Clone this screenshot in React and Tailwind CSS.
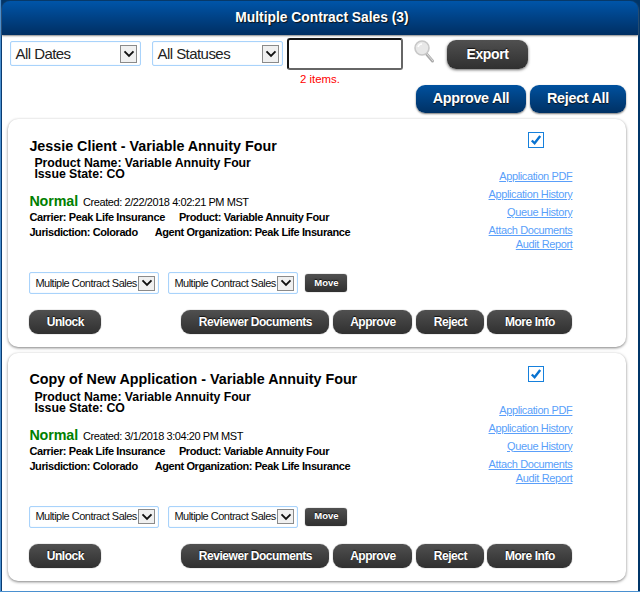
import React from "react";

function Arrow({ className }) {
  return (
    <span className={`flex shrink-0 items-center justify-center border border-[#8a8a8a] bg-[#f0f0f0] ${className}`}>
      <svg width="12" height="8" viewBox="0 0 12 8" fill="none" stroke="#111" strokeWidth="1.9">
        <path d="M1.5 1.3 6 5.8 10.5 1.3" />
      </svg>
    </span>
  );
}

function FilterSelect({ label }) {
  return (
    <div className="flex h-[25px] w-[131px] items-center justify-between rounded-[2px] border border-[#a9d3fb] bg-white pr-[3px] pl-[4.5px] text-[15px] tracking-[-0.55px] text-[#222] shadow-[inset_0_0_1px_#a9d3fb]">
      <span className="pt-px">{label}</span>
      <Arrow className="h-[18px] w-[17px]" />
    </div>
  );
}

function QueueSelect() {
  return (
    <div className="flex h-[22px] w-[130px] items-center rounded-[2px] border border-[#a9d3fb] bg-white pr-[3px] pl-[5px] text-[11px] tracking-[-0.51px] text-[#111] shadow-[inset_0_0_1px_#a9d3fb]">
      <span className="min-w-0 flex-1 whitespace-nowrap">Multiple Contract Sales</span>
      <Arrow className="h-[15px] w-[17px]" />
    </div>
  );
}

const dark =
  "flex items-center justify-center bg-linear-to-b from-[#505050] to-[#303030] font-bold text-white whitespace-nowrap shadow-[0_0_1px_#555] [text-shadow:0_-1px_1px_#111]";
const blue =
  "flex h-[28px] items-center justify-center rounded-[9px] bg-linear-to-b from-[#00519f] to-[#003164] text-[14.3px] tracking-[-0.28px] font-bold text-white whitespace-nowrap shadow-[0_1px_2px_#777] [text-shadow:0_1px_1px_#111]";

function Card({ title, created, className }) {
  return (
    <section className={`flex h-[228px] w-[618px] flex-col rounded-[10px] bg-white pl-[21.4px] shadow-[0_1px_3px_rgba(0,0,0,0.5)] ${className}`}>
      <div className="flex h-[153px]">
        <div className="w-[430px] pt-[16.9px] whitespace-nowrap text-black">
          <h2 className="h-[20px] text-[14.3px] leading-[20px] font-bold">{title}</h2>
          <div className="mt-[2.6px] h-[11px] pl-[5px] text-[12.3px] leading-[11px] font-bold tracking-[-0.03px]">Product Name: Variable Annuity Four</div>
          <div className="h-[11px] pl-[5px] text-[12.3px] leading-[11px] font-bold tracking-[-0.03px]">Issue State: CO</div>
          <div className="mt-[11.5px] flex h-[18px] items-baseline gap-[5px] leading-[18px]">
            <span className="text-[14.3px] font-bold tracking-[-0.1px] text-[#008000]">Normal</span>
            <span className="text-[11px] tracking-[-0.43px]">Created: {created}</span>
          </div>
          <div className="flex h-[15px] gap-[14px] text-[11px] leading-[15px] font-bold tracking-[-0.38px]">
            <span>Carrier: Peak Life Insurance</span>
            <span>Product: Variable Annuity Four</span>
          </div>
          <div className="flex h-[15px] gap-[17px] text-[11px] leading-[15px] font-bold tracking-[-0.41px]">
            <span>Jurisdiction: Colorado</span>
            <span>Agent Organization: Peak Life Insurance</span>
          </div>
        </div>
        <div className="flex w-[113px] flex-col items-end pt-[13px] text-[11px] tracking-[-0.38px] whitespace-nowrap text-[#5a9ffa]">
          <span className="mr-[28px] mb-[20px] flex h-[16px] w-[16px] shrink-0 items-center justify-center border border-[#1680dc] bg-white">
            <svg width="12" height="12" viewBox="0 0 12 12" fill="none" stroke="#0872d0" strokeWidth="2.4">
              <path d="M1.8 6.5 4.6 9.3 10.2 2" />
            </svg>
          </span>
          <a className="h-[18px] leading-[16px] underline">Application PDF</a>
          <a className="h-[18px] leading-[16px] underline">Application History</a>
          <a className="h-[18px] leading-[16px] underline">Queue History</a>
          <a className="h-[14px] leading-[16px] underline">Attach Documents</a>
          <a className="h-[14px] leading-[16px] underline">Audit Report</a>
        </div>
      </div>
      <div className="flex h-[22px] items-center">
        <QueueSelect />
        <div className="w-[9px]" />
        <QueueSelect />
        <button className={`${dark} ml-[7px] h-[18px] w-[42px] rounded-[3px] text-[9.5px]`}>Move</button>
      </div>
      <div className="mt-[16px] flex h-[24px] text-[12px] tracking-[-0.45px]">
        <button className={`${dark} w-[72px] rounded-[9px]`}>Unlock</button>
        <button className={`${dark} ml-[80px] w-[148px] rounded-[9px]`}>Reviewer Documents</button>
        <button className={`${dark} ml-[4px] w-[79px] rounded-[9px]`}>Approve</button>
        <button className={`${dark} ml-[4px] w-[68px] rounded-[9px]`}>Reject</button>
        <button className={`${dark} ml-[3px] w-[85px] rounded-[9px]`}>More Info</button>
      </div>
    </section>
  );
}

export default function App() {
  return (
    <div className="h-[593px] w-[640px] overflow-hidden bg-white font-['Liberation_Sans',Arial,sans-serif]">
      <div className="h-[592px] border-b border-l border-[#4a90d0] bg-[#003568]">
        <div className="h-full border-l border-[#0a3b70] pt-px pr-[2px]">
          <div className="flex h-full flex-col bg-[#003568]">
            <header className="z-10 flex h-[34px] shrink-0 items-center justify-center rounded-t-[8px] bg-linear-to-b from-[#0055a9] to-[#002f63] text-[13.8px] font-bold text-white shadow-[0_1px_2px_#888] [text-shadow:1px_1px_1px_#111]">
              <h1 className="pl-[4px]">Multiple Contract Sales (3)</h1>
            </header>
            <main className="flex-1 bg-white">
              <div className="flex h-[50px] pl-[8px]">
                <div className="flex gap-[11px] pt-[6px]">
                  <FilterSelect label="All Dates" />
                  <FilterSelect label="All Statuses" />
                </div>
                <div className="ml-[4px] pt-[3px]">
                  <input className="block h-[32px] w-[116px] rounded-[3px] border-2 border-t-[#151515] border-r-[#666] border-b-[#666] border-l-[#151515] bg-white" />
                  <div className="pt-[2px] pl-[13px] text-[11.4px] leading-[15px] text-[#f00]">2 items.</div>
                </div>
                <svg className="mt-[4px] ml-[10px]" width="23" height="26" viewBox="0 0 23 26">
                  <path d="m13.5 15 6 7" stroke="#aaa" strokeWidth="3" strokeLinecap="round" />
                  <path d="m14 15 6 7" stroke="#ddd" strokeWidth="1" />
                  <circle cx="9" cy="9" r="7" fill="#e8e8e8" stroke="#c8c8c8" strokeWidth="1.6" />
                  <path d="M5 8q1-3 4-3" fill="none" stroke="#fff" strokeWidth="1.5" />
                </svg>
                <button className={`${dark} mt-[5px] ml-[11px] h-[29px] w-[81px] rounded-[9px] text-[14px] tracking-[-0.4px] shadow-[0_1px_3px_#666]`}>Export</button>
              </div>
              <div className="flex gap-[4px] pl-[414px]">
                <button className={`${blue} w-[110px]`}>Approve All</button>
                <button className={`${blue} w-[96px]`}>Reject All</button>
              </div>
              <div className="flex flex-col gap-[5.6px] pt-[6px] pl-[6px]">
                <Card title="Jessie Client - Variable Annuity Four" created="2/22/2018 4:02:21 PM MST" />
                <Card title="Copy of New Application - Variable Annuity Four" created="3/1/2018 3:04:20 PM MST" />
              </div>
            </main>
          </div>
        </div>
      </div>
    </div>
  );
}
